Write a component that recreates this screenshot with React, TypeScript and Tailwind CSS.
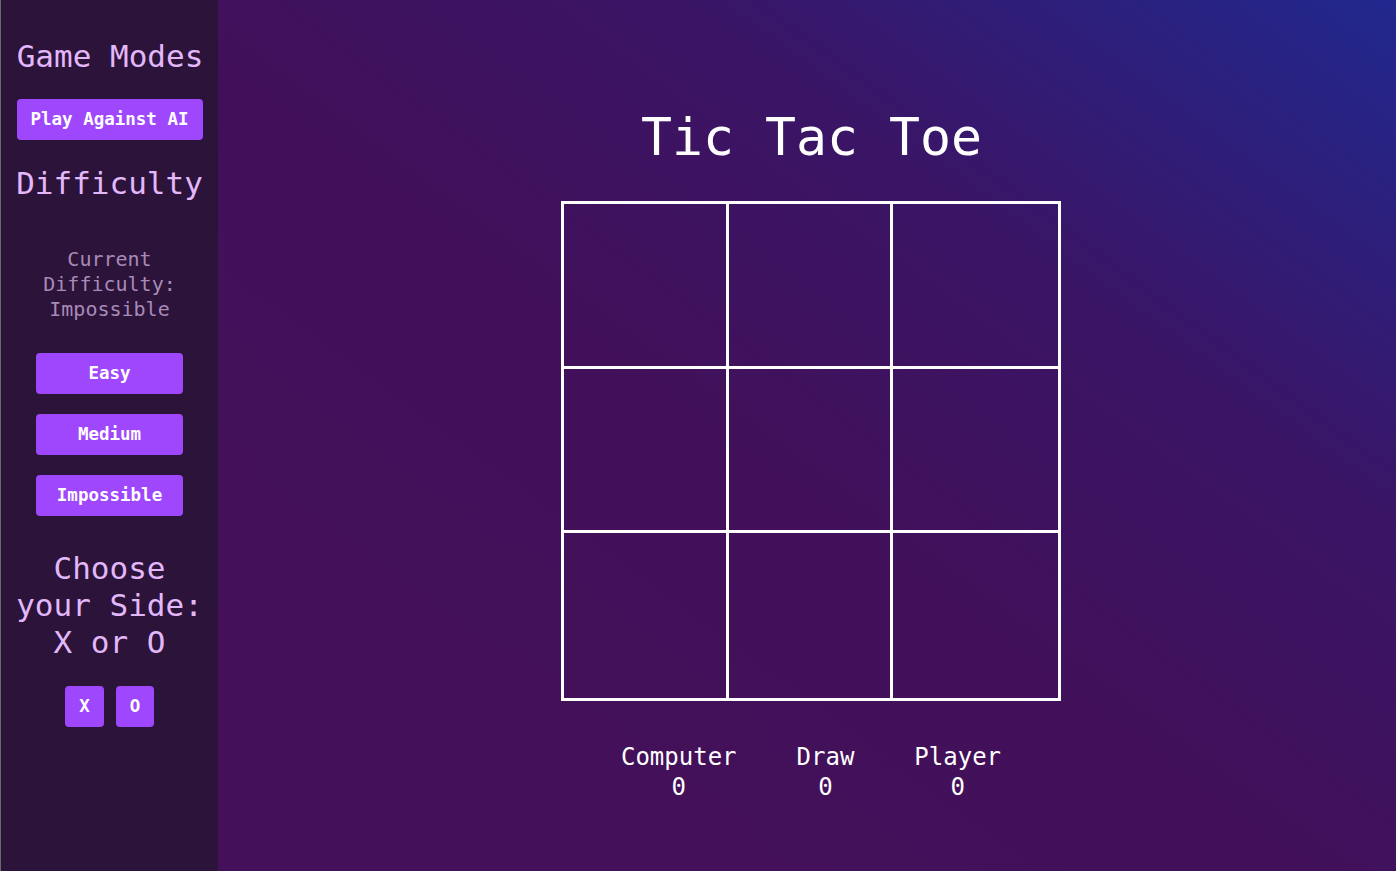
import React from "react";

const mono = "font-['DejaVu_Sans_Mono','Liberation_Mono',monospace]";

function Btn({ label, className }: { label: string; className: string }) {
  return (
    <button
      className={`bg-[#9f47fd] text-white font-bold text-[17.5px] rounded-[4px] h-[41px] flex items-center justify-center ${className}`}
    >
      {label}
    </button>
  );
}

export default function App() {
  const cells = Array.from({ length: 9 });
  return (
    <div className={`${mono} flex w-[1396px] h-[871px] overflow-hidden`}>
      <aside className="w-[218px] shrink-0 bg-[#2c1339] border-l border-[#6a6a6a] flex flex-col items-center pt-[38px]">
        <h2 className="text-[31px] leading-[37px] text-[#e2b8fb] pl-[1px]">Game Modes</h2>
        <Btn label="Play Against AI" className="mt-[24px] w-[186px]" />
        <h2 className="mt-[25px] text-[31px] leading-[37px] text-[#e2b8fb]">Difficulty</h2>
        <p className="mt-[45px] text-[20px] leading-[25px] text-[#a88ab9] text-center w-[140px]">
          Current Difficulty: Impossible
        </p>
        <div className="mt-[31px] flex flex-col gap-[20px]">
          <Btn label="Easy" className="w-[147px]" />
          <Btn label="Medium" className="w-[147px]" />
          <Btn label="Impossible" className="w-[147px]" />
        </div>
        <h2 className="mt-[34px] text-[31px] leading-[37px] text-[#e2b8fb] text-center w-[200px]">
          Choose your Side: X or O
        </h2>
        <div className="mt-[25px] flex gap-[12px]">
          <Btn label="X" className="w-[39px] text-[16px]" />
          <Btn label="O" className="w-[38px] text-[16px]" />
        </div>
      </aside>
      <main className="flex-1 flex flex-col items-center pl-[8px] bg-[linear-gradient(to_top_right,#45105a_0%,#42105a_45%,#3a1566_70%,#21288e_100%)]">
        <h1 className="mt-[107px] text-[51.5px] leading-[60px] text-white pl-[1px]">Tic Tac Toe</h1>
        <div className="mt-[34px] w-[500px] h-[500px] border-[3px] border-white grid grid-cols-3 grid-rows-3">
          {cells.map((_, i) => (
            <div
              key={i}
              className={`border-white ${i % 3 !== 2 ? "border-r-[3px]" : ""} ${i < 6 ? "border-b-[3px]" : ""}`}
            />
          ))}
        </div>
        <div className="mt-[41px] flex gap-[60px] text-white text-[24px] leading-[30px]">
          <div className="flex flex-col items-center">
            <span>Computer</span>
            <span>0</span>
          </div>
          <div className="flex flex-col items-center">
            <span>Draw</span>
            <span>0</span>
          </div>
          <div className="flex flex-col items-center">
            <span>Player</span>
            <span>0</span>
          </div>
        </div>
      </main>
    </div>
  );
}
